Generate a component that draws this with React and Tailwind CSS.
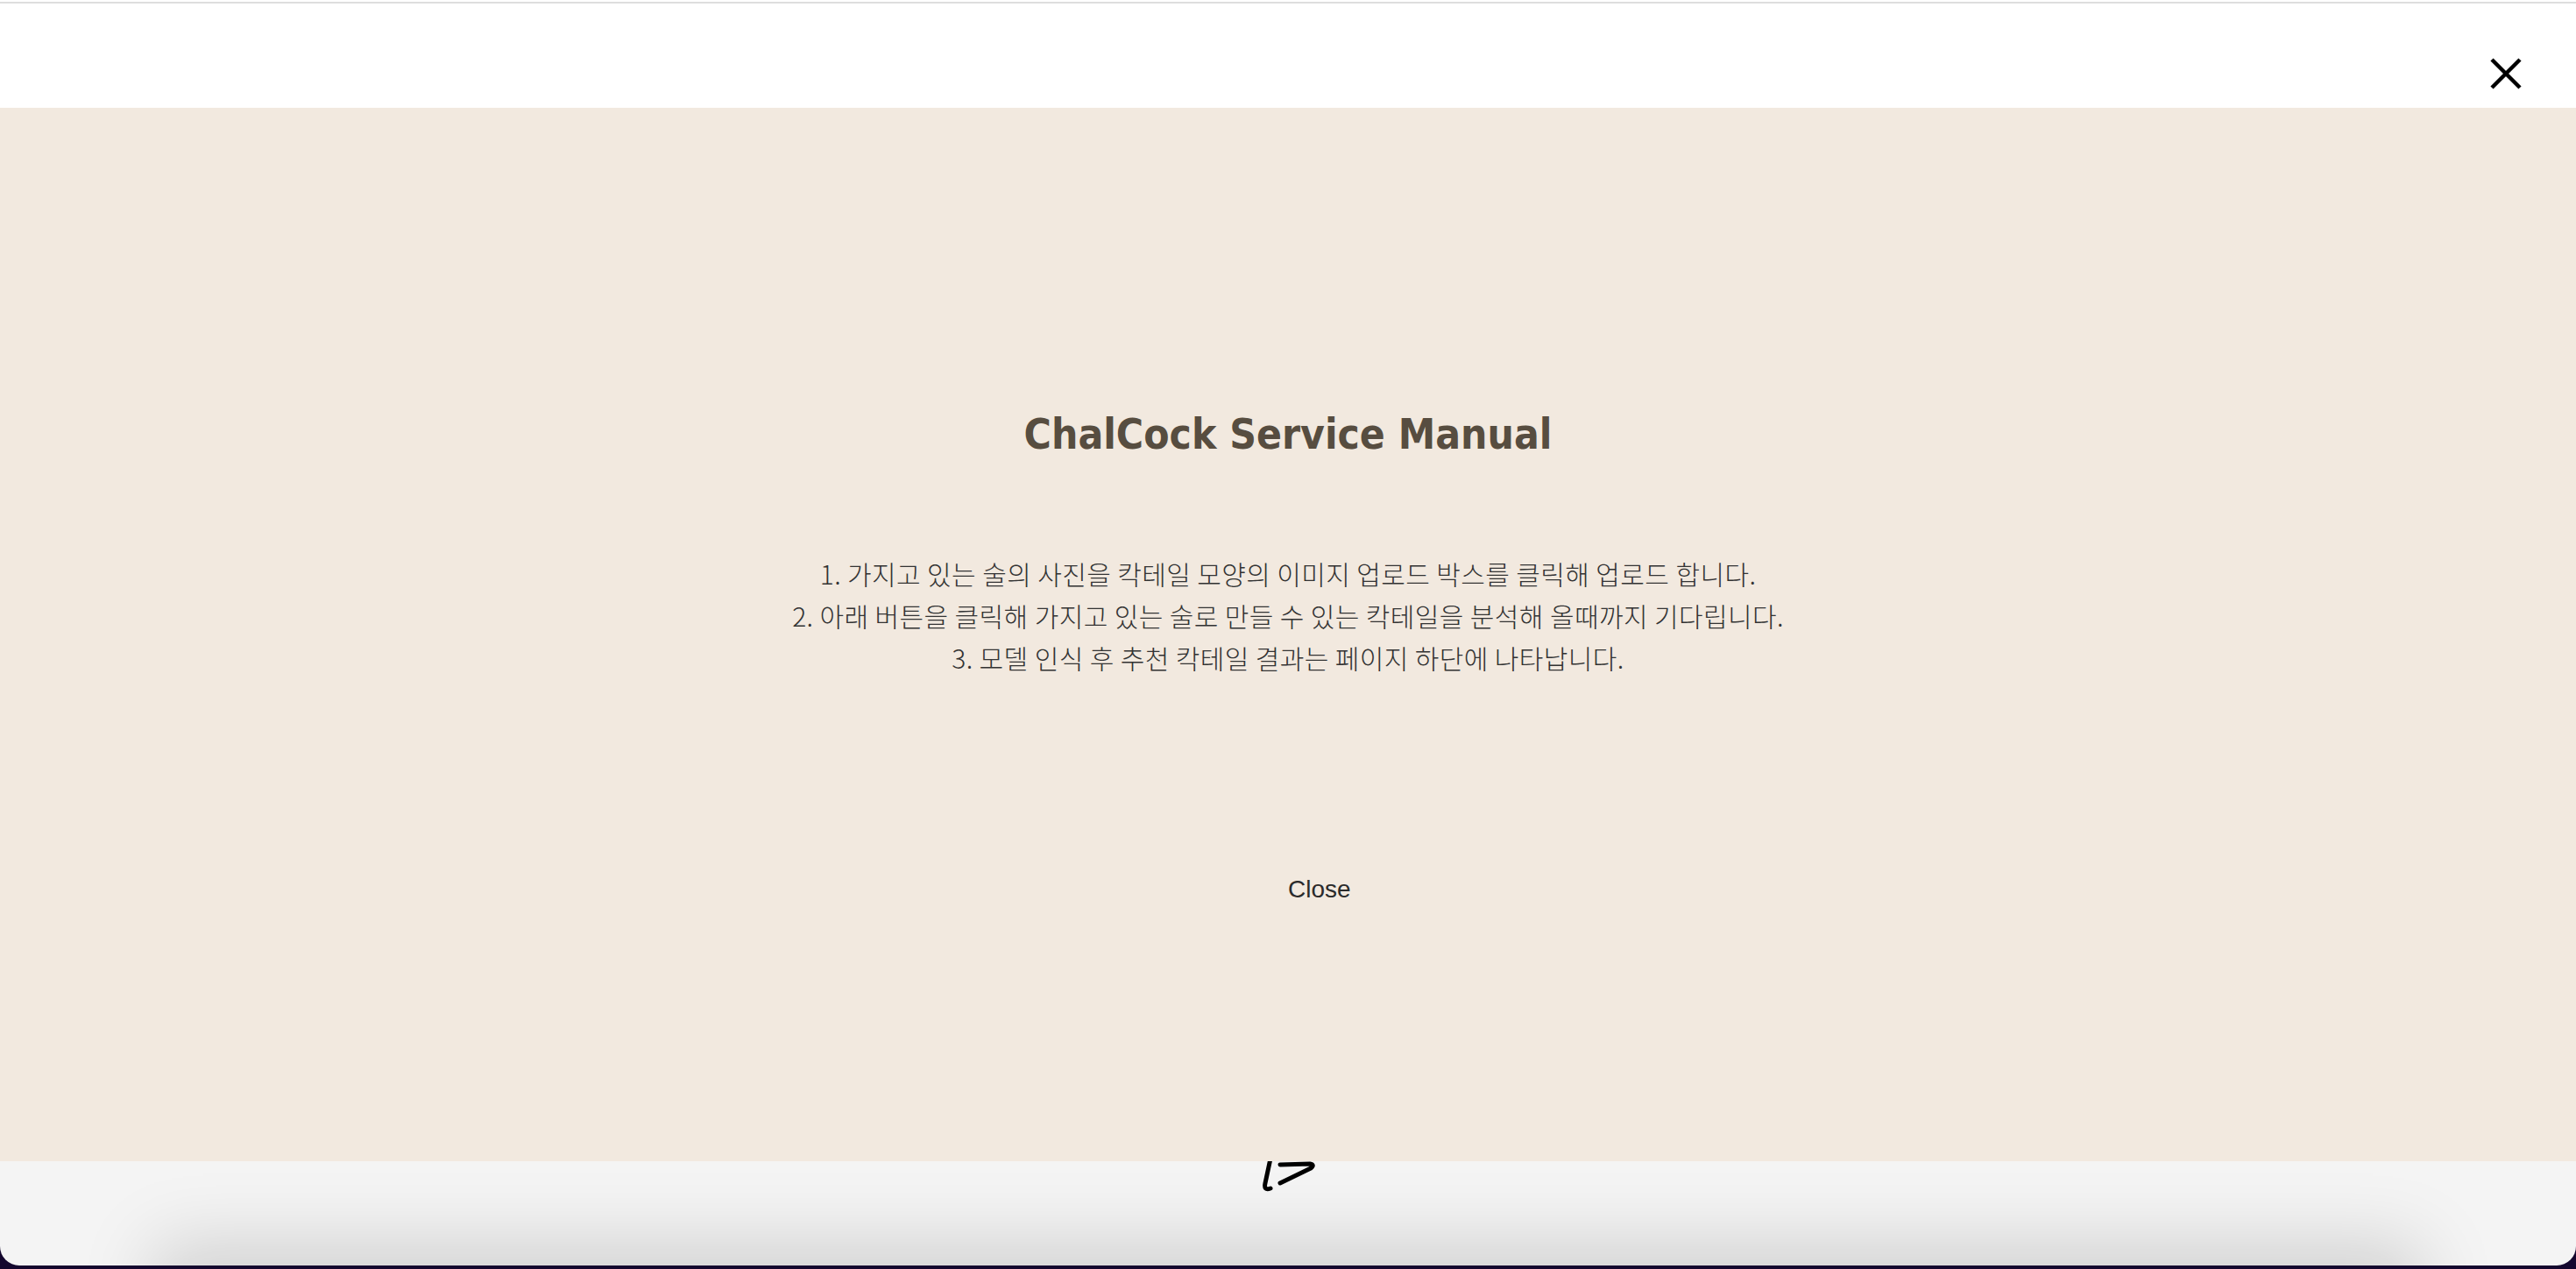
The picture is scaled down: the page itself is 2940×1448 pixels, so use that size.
import React from "react";

export default function App() {
  return (
    <div className="w-full h-[1448px] bg-[#14072e] overflow-hidden">
      <div className="h-[1444px] bg-[#f4f4f4] rounded-b-[22px] overflow-hidden flex flex-col">
        {/* modal header */}
        <div className="h-[123px] bg-white flex flex-col">
          <div className="mt-[2px] h-[2px] bg-[#dedede]" />
          <div className="flex justify-end">
            <button className="mt-[62px] mr-[62px] w-[36px] h-[36px] flex items-center justify-center">
              <svg width="36" height="36" viewBox="0 0 36 36">
                <path d="M2 2 L34 34 M34 2 L2 34" stroke="#000" strokeWidth="4.5" strokeLinecap="butt" fill="none" />
              </svg>
            </button>
          </div>
        </div>

        {/* modal body */}
        <div className="h-[1202px] bg-[#f2e9df] flex flex-col items-center">
          <h1
            className="mt-[343px] text-[47.5px] leading-[60px] font-bold text-[#574d40] [font-stretch:condensed]"
            style={{ fontFamily: '"DejaVu Sans Condensed", "DejaVu Sans", sans-serif' }}
          >
            ChalCock Service Manual
          </h1>
          <div
            className="mt-[104px] text-[30px] leading-[48px] font-light tracking-[0.4px] text-[#333333] text-center"
            style={{ fontFamily: '"Noto Sans CJK KR", sans-serif' }}
          >
            <p>1. 가지고 있는 술의 사진을 칵테일 모양의 이미지 업로드 박스를 클릭해 업로드 합니다.</p>
            <p>2. 아래 버튼을 클릭해 가지고 있는 술로 만들 수 있는 칵테일을 분석해 올때까지 기다립니다.</p>
            <p>3. 모델 인식 후 추천 칵테일 결과는 페이지 하단에 나타납니다.</p>
          </div>
          <button
            className="mt-[225px] self-start ml-[50%] text-[28px] leading-[32px] text-[#2b2b2b]"
            style={{ fontFamily: '"Liberation Sans", Arial, sans-serif' }}
          >
            Close
          </button>
        </div>

        {/* page beneath */}
        <div className="flex-1 relative flex justify-center">
          <svg width="80" height="40" viewBox="0 0 80 40" className="relative z-10">
            <path d="M20 -3 L14 25 Q12 34 20 31" stroke="#000" strokeWidth="5" strokeLinecap="round" strokeLinejoin="round" fill="none" />
            <path d="M31 4 L65 3 Q71 4 66 8 L31 25" stroke="#000" strokeWidth="5" strokeLinecap="round" strokeLinejoin="round" fill="none" />
          </svg>
          <div className="absolute left-[200px] right-[200px] top-full h-[200px] shadow-[0_0_80px_24px_rgba(0,0,0,0.15)]" />
        </div>
      </div>
    </div>
  );
}
